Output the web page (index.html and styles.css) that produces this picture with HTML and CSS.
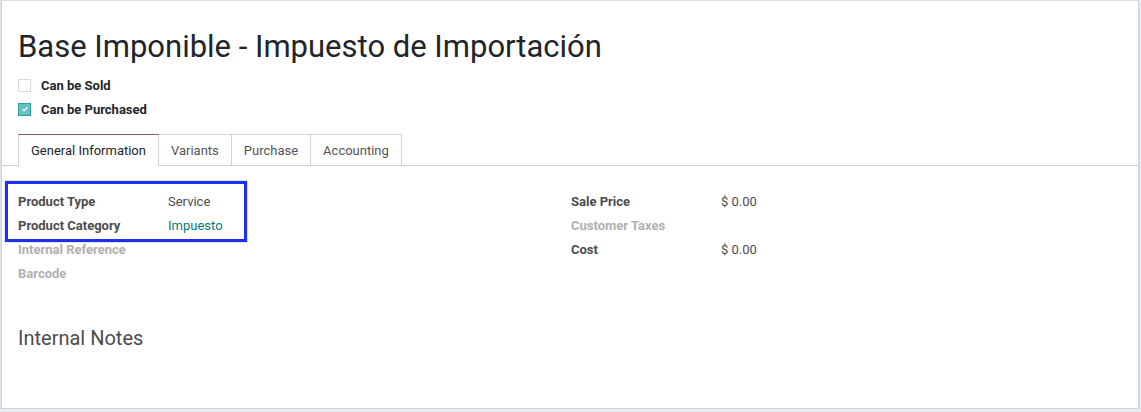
FILE: index.html
```html
<!DOCTYPE html>
<html>
<head>
<meta charset="utf-8">
<link rel="stylesheet" href="styles.css">
</head>
<body>
<div class="sheet">
  <h1 class="title">Base Imponible - Impuesto de Importación</h1>
  <div class="checks">
    <div class="check"><span class="box"></span><span class="clabel">Can be Sold</span></div>
    <div class="check"><span class="box checked"><svg width="8" height="8" viewBox="0 0 8 8"><path d="M1.5 4.2 L3.2 5.8 L6.5 2.2" fill="none" stroke="#e8f6f6" stroke-width="1.3"/></svg></span><span class="clabel">Can be Purchased</span></div>
  </div>
  <div class="tabs">
    <div class="tab active">General Information</div>
    <div class="tab">Variants</div>
    <div class="tab">Purchase</div>
    <div class="tab">Accounting</div>
  </div>
  <div class="content">
    <div class="groups">
      <div class="group">
        <div class="row"><span class="label">Product Type</span><span class="value">Service</span></div>
        <div class="row"><span class="label">Product Category</span><span class="value link">Impuesto</span></div>
        <div class="row"><span class="label muted">Internal Reference</span><span class="value"></span></div>
        <div class="row"><span class="label muted">Barcode</span><span class="value"></span></div>
        <div class="highlight"></div>
      </div>
      <div class="group">
        <div class="row"><span class="label">Sale Price</span><span class="value">$ 0.00</span></div>
        <div class="row"><span class="label muted">Customer Taxes</span><span class="value"></span></div>
        <div class="row"><span class="label">Cost</span><span class="value">$ 0.00</span></div>
      </div>
    </div>
    <h2 class="notes">Internal Notes</h2>
  </div>
</div>
</body>
</html>
```
FILE: styles.css
```css
html, body { margin: 0; padding: 0; background: #e9ecef; }
body { font-family: Roboto, "Noto Sans", sans-serif; color: #4c4c4c; }
.sheet {
  margin-left: 1px;
  width: 1138px;
  height: 409px;
  background: #fff;
  border: 1px solid #ced4da;
  border-top-color: #dde1e5;
  box-shadow: 0 3px 3px rgba(0,0,0,0.12);
  box-sizing: border-box;
  overflow: hidden;
}
.title {
  margin: 28px 0 0 16px;
  font-size: 31px;
  font-weight: 400;
  color: #212529;
  line-height: 36px;
}
.checks { margin: 8px 0 0 16px; display: flex; flex-direction: column; }
.check { display: flex; align-items: center; height: 24px; }
.box {
  width: 11px; height: 11px; border: 1px solid #d8d8d8; background: #fff;
  display: flex; align-items: center; justify-content: center; margin-right: 10px;
}
.box.checked { background: #64c1bf; border-color: #2c9e9b; }
.clabel { font-size: 13px; font-weight: 700; color: #212529; }
.tabs {
  display: flex; margin-top: 13px; padding-left: 16px;
  border-bottom: 1px solid #ced4da; height: 31px;
}
.tab {
  font-size: 13px; color: #555; padding: 0 12px; line-height: 31px;
  border: 1px solid #ced4da; border-left: none; border-bottom: none; height: 31px;
  box-sizing: border-box;
}
.tab.active {
  border-left: 1px solid #ced4da; border-top: 1px solid #875a7b; color: #212529;
  background: #fff; height: 32px; padding: 0 12px;
}
.content { padding: 23px 0 0 16px; }
.groups { display: flex; }
.group { width: 553px; position: relative; }
.row { display: flex; height: 24px; align-items: center; font-size: 13px; }
.label { width: 150px; font-weight: 700; color: #4c4c4c; }
.label.muted { color: #b0b0b0; }
.value { color: #4c4c4c; font-size: 13px; }
.value.link { color: #018079; }
.highlight {
  position: absolute; left: -13px; top: -8px; width: 236px; height: 55px;
  border: 3px solid #1f2ff0;
  box-shadow: 0 0 1px #4b55f5;
}
.notes { margin: 42px 0 0 0; font-size: 20px; line-height: 23px; font-weight: 400; color: #4c4c4c; }
```
